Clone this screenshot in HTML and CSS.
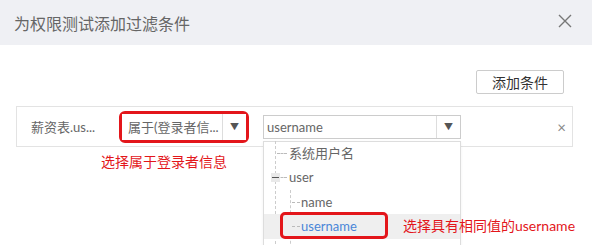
FILE: index.html
```html
<!DOCTYPE html>
<html lang="zh-CN">

<head>
    <meta charset="UTF-8">
    <meta name="viewport" content="width=device-width, initial-scale=1.0">
    <title>添加过滤条件</title>
    <link rel="stylesheet" href="styles.css">
</head>

<body>
    <div class="dialog">
        <div class="dialog_head">
            <span class="dialog_title">为权限测试添加过滤条件</span>
            <svg class="close" width="14" height="14" viewBox="0 0 14 14">
                <path d="M1 1L13 13M13 1L1 13" stroke="#777" stroke-width="1.4" fill="none" />
            </svg>
        </div>
        <div class="dialog_body">
            <div class="toolbar">
                <button class="add_btn">添加条件</button>
            </div>
            <div class="filter_row">
                <span class="field">薪资表.us...</span>
                <div class="mark">
                    <div class="select op_select">
                        <span class="select_text">属于(登录者信...</span>
                        <span class="select_arrow">&#9660;</span>
                    </div>
                </div>
                <div class="value_wrap">
                    <div class="select value_select">
                        <span class="select_text">username</span>
                        <span class="select_arrow">&#9660;</span>
                    </div>
                    <div class="dropdown">
                        <div class="tree">
                            <div class="node">系统用户名</div>
                            <div class="node">
                                <i class="toggle"></i>user
                            </div>
                            <div class="children">
                                <div class="leaf">name</div>
                                <div class="leaf selected">
                                    username
                                    <span class="mark_item"></span>
                                    <span class="note note_value">选择具有相同值的username</span>
                                </div>
                            </div>
                        </div>
                    </div>
                </div>
                <span class="remove">&times;</span>
            </div>
            <div class="note note_op">选择属于登录者信息</div>
        </div>
    </div>
</body>

</html>
```

FILE: styles.css
```css
body {
    margin: 0;
    font-family: Lato, "Noto Sans CJK SC", sans-serif;
    background: #fff;
    overflow: hidden;
}

.dialog {
    width: 592px;
    height: 245px;
    overflow: hidden;
}

.dialog_head {
    height: 45px;
    background-color: #eff0f4;
    display: flex;
    align-items: center;
    justify-content: space-between;
    padding: 0 20px 0 14px;
}

.dialog_title {
    font-size: 16px;
    color: #666;
}

.close {
    margin-top: -3px;
}

.dialog_body {
    padding: 0 19px 0 16px;
}

.toolbar {
    display: flex;
    justify-content: flex-end;
    padding: 25px 9px 0 0;
}

.add_btn {
    width: 88px;
    height: 24px;
    border: 1px solid #ccc;
    border-radius: 2px;
    background: #fff;
    font-family: inherit;
    font-size: 14px;
    color: #333;
    padding: 0;
}

.filter_row {
    margin-top: 12px;
    height: 39px;
    border: 1px solid #e3e3e3;
    display: flex;
    align-items: center;
    padding-left: 14px;
}

.field {
    width: 88px;
    font-size: 13px;
    color: #666;
}

.mark {
    width: 124px;
    height: 26px;
    border: 3px solid #e3161b;
    border-radius: 6px;
    display: flex;
}

.select {
    display: flex;
    align-items: center;
    background: #fff;
    box-sizing: border-box;
}

.op_select {
    width: 100%;
    height: 100%;
}

.select_text {
    flex: 1;
    font-size: 13px;
    color: #666;
    padding-left: 6px;
    white-space: nowrap;
}

.select_arrow {
    width: 23px;
    align-self: stretch;
    display: flex;
    align-items: center;
    justify-content: center;
    border-left: 1px solid #ddd;
    font-size: 9px;
    color: #555;
}

.value_wrap {
    position: relative;
    margin-left: 14px;
}

.value_select {
    width: 198px;
    height: 24px;
    border: 1px solid #ccc;
}

.value_select .select_text {
    padding-left: 3px;
    color: #666;
}

.dropdown {
    position: absolute;
    top: 26px;
    left: 0;
    width: 198px;
    height: 130px;
    box-sizing: border-box;
    border: 1px solid #ddd;
    background: #fff;
    box-shadow: 0 1px 3px rgba(0, 0, 0, 0.06);
    z-index: 2;
}

.tree {
    position: relative;
    margin-top: -1px;
    font-size: 13px;
    color: #666;
}

.tree::before {
    content: "";
    position: absolute;
    left: 11px;
    top: 0;
    bottom: 0;
    border-left: 1px dashed #ccc;
}

.node,
.leaf {
    position: relative;
    height: 24.6px;
    line-height: 24.6px;
}

.node {
    padding-left: 25px;
}

.node::before,
.leaf::before {
    content: "";
    position: absolute;
    top: 12px;
    border-top: 1px dashed #bbb;
}

.node::before {
    left: 13px;
    width: 10px;
}

.toggle {
    position: absolute;
    left: 7px;
    top: 8px;
    width: 9px;
    height: 9px;
    background: #e9e9e9;
    z-index: 1;
}

.toggle::after {
    content: "";
    position: absolute;
    left: 1px;
    top: 4px;
    width: 7px;
    border-top: 1px solid #555;
}

.children {
    position: relative;
    padding-bottom: 20px;
}

.children::before {
    content: "";
    position: absolute;
    left: 26px;
    top: 0;
    bottom: 0;
    border-left: 1px dashed #ccc;
}

.leaf {
    padding-left: 37px;
}

.leaf::before {
    left: 28px;
    width: 8px;
}

.selected {
    background: #efefef;
    color: #4a86d8;
}

.mark_item {
    position: absolute;
    left: 16px;
    top: -2px;
    width: 102px;
    height: 21px;
    border: 3px solid #e3161b;
    border-radius: 5px;
}

.remove {
    margin-left: auto;
    margin-right: 6px;
    font-size: 15px;
    color: #888;
}

.note {
    font-size: 14px;
    color: #e3161b;
    white-space: nowrap;
}

.note_op {
    margin: 5px 0 0 85px;
    line-height: 20px;
}

.note_value {
    position: absolute;
    left: 139px;
    top: 0;
}
```
